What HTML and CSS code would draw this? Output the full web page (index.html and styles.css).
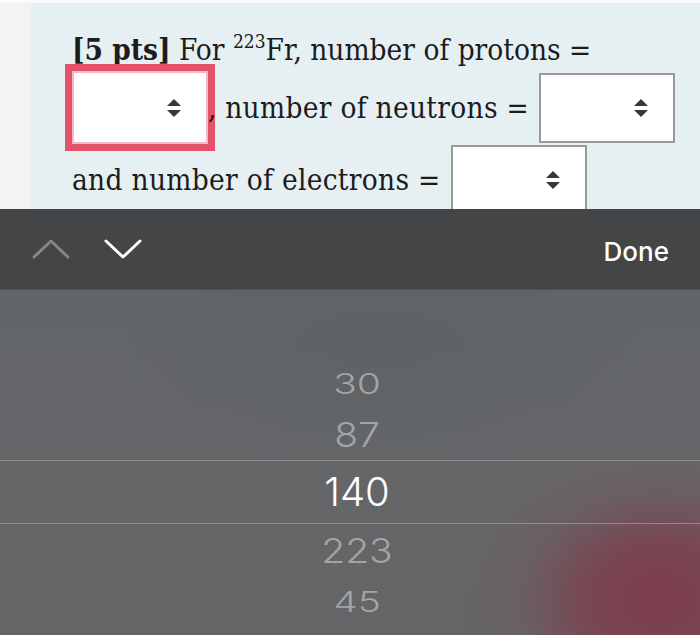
FILE: index.html
```html
<!DOCTYPE html>
<html lang="en">
<head>
<meta charset="utf-8">
<title>Question picker</title>
<link rel="stylesheet" href="styles.css">
</head>
<body>
<div class="page">
  <div class="question-area">
    <div class="panel">
      <div class="row row-1">
        <span class="txt"><b class="pts">[5 pts]</b> For <sup class="iso">223</sup>Fr, number of protons =</span>
      </div>
      <div class="row row-2">
        <span class="select focused"><svg class="arrows" viewBox="0 0 16 20" width="16" height="20"><polygon points="8,1 15,8 1,8"/><polygon points="1,12 15,12 8,19"/></svg></span><span class="txt comma">,</span><span class="txt wide"> number of neutrons =</span>
        <span class="select gap-left"><svg class="arrows" viewBox="0 0 16 20" width="16" height="20"><polygon points="8,1 15,8 1,8"/><polygon points="1,12 15,12 8,19"/></svg></span>
      </div>
      <div class="row row-3">
        <span class="txt wide">and number of electrons =</span>
        <span class="select gap-left"><svg class="arrows" viewBox="0 0 16 20" width="16" height="20"><polygon points="8,1 15,8 1,8"/><polygon points="1,12 15,12 8,19"/></svg></span>
      </div>
    </div>
  </div>
  <div class="toolbar">
    <div class="nav">
      <svg class="chev chev-up" viewBox="0 0 38 20" width="38" height="20"><polyline points="2,18 19,2 36,18"/></svg>
      <svg class="chev chev-down" viewBox="0 0 38 20" width="38" height="20"><polyline points="2,2 19,18 36,2"/></svg>
    </div>
    <span class="done">Done</span>
  </div>
  <div class="picker">
    <div class="wheel">
      <div class="item far"><span>30</span></div>
      <div class="item near"><span>87</span></div>
      <div class="item selected"><span>140</span></div>
      <div class="item near"><span>223</span></div>
      <div class="item far"><span>45</span></div>
    </div>
  </div>
</div>
</body>
</html>
```
FILE: styles.css
```css
html, body {
  margin: 0;
  padding: 0;
}
body {
  width: 700px;
  height: 635px;
  overflow: hidden;
  background: #f3f3f3;
}
.page {
  display: flex;
  flex-direction: column;
  height: 635px;
}
.question-area {
  height: 206px;
  flex: none;
  overflow: hidden;
  background: #f3f3f3;
  border-top: 3px solid #fafafa;
  padding-left: 31px;
}
.panel {
  height: 100%;
  background: #e6f0f3;
  padding: 28px 0 0 41px;
  box-sizing: border-box;
  font-family: "DejaVu Serif", "Liberation Serif", serif;
  font-stretch: condensed;
  font-size: 29.5px;
  color: #1c1c1c;
}
.row {
  display: flex;
  align-items: center;
  white-space: pre;
}
.row-1 {
  height: 40px;
  margin-bottom: 0;
}
.row-2 {
  margin-bottom: 1px;
}
.txt {
  line-height: 36px;
}
.wide {
  letter-spacing: 0.3px;
}
.pts {
  font-weight: bold;
}
.iso {
  font-size: 19px;
  vertical-align: 0;
  position: relative;
  top: -12px;
}
.select {
  width: 136px;
  height: 70px;
  box-sizing: border-box;
  background: #fff;
  border: 2px solid #9a9a9a;
  display: flex;
  align-items: center;
  justify-content: flex-end;
  padding-right: 24px;
  flex: none;
}
.select.focused {
  border-color: #f2bcc5;
  box-shadow: 0 0 0 7px #e4536a;
  height: 73px;
}
.gap-left {
  margin-left: 10px;
}
.arrows polygon {
  fill: #383838;
}
.comma {
  position: relative;
  z-index: 1;
}
.toolbar {
  height: 81px;
  flex: none;
  background: #444546;
  display: flex;
  align-items: center;
  justify-content: space-between;
  padding: 0 31px 0 32px;
  box-sizing: border-box;
  border-bottom: 1px solid #505254;
}
.nav {
  display: flex;
  gap: 34px;
  align-items: center;
}
.chev polyline {
  fill: none;
  stroke-width: 3;
  stroke-linecap: round;
  stroke-linejoin: round;
}
.chev-up polyline {
  stroke: #858789;
}
.chev-down polyline {
  stroke: #ffffff;
}
.done {
  font-family: Inter, "Liberation Sans", sans-serif;
  font-weight: 500;
  font-size: 26px;
  color: #ffffff;
  padding-top: 4px;
}
.picker {
  flex: 1;
  background:
    radial-gradient(ellipse 200px 160px at 660px 310px, rgba(126, 60, 76, 1) 0%, rgba(124, 64, 78, 0.85) 35%, rgba(115, 85, 92, 0.35) 70%, rgba(110, 95, 100, 0) 100%),
    radial-gradient(ellipse 260px 120px at 380px 60px, rgba(88, 96, 100, 0.5), rgba(88, 96, 100, 0) 100%),
    linear-gradient(180deg, #626568 0%, #656668 50%, #646566 100%);
  padding-top: 68px;
  box-sizing: border-box;
}
.wheel {
  display: flex;
  flex-direction: column;
  font-family: Inter, "Liberation Sans", sans-serif;
  font-weight: 300;
  font-size: 39px;
  color: #a3a4a5;
}
.item {
  display: flex;
  align-items: center;
  justify-content: center;
  padding-left: 14px;
}
.item span {
  display: block;
  line-height: 1;
}
.far {
  height: 50px;
}
.far span {
  transform: scaleY(0.74);
}
.near {
  height: 52px;
}
.near span {
  transform: scaleY(0.86);
}
.selected {
  height: 62px;
  border-top: 1px solid #8e8f90;
  border-bottom: 1px solid #8e8f90;
  color: #ffffff;
  font-size: 40px;
}
```
